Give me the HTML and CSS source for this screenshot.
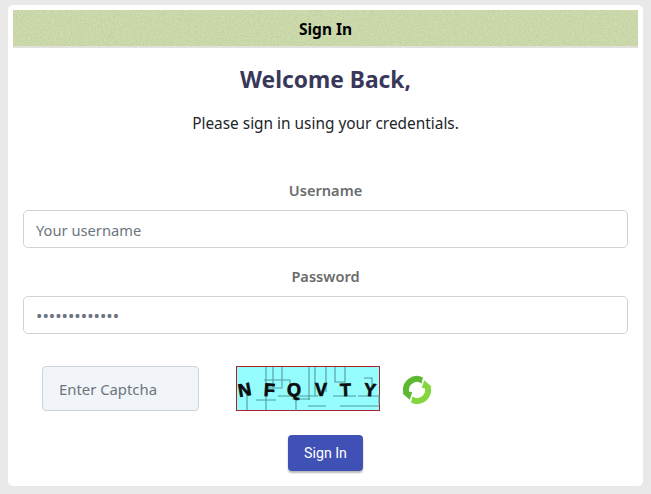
FILE: index.html
```html
<!DOCTYPE html>
<html lang="en">
<head>
<meta charset="utf-8">
<title>Sign In</title>
<link rel="stylesheet" href="styles.css">
</head>
<body>
<main class="card">
  <header class="card-header">
    <svg class="texture" aria-hidden="true" width="100%" height="100%">
      <filter id="grain-dark" x="0" y="0" width="100%" height="100%" color-interpolation-filters="sRGB">
        <feTurbulence type="fractalNoise" baseFrequency="0.6" numOctaves="2" seed="4"/>
        <feColorMatrix type="matrix" values="0 0 0 0 0.72  0 0 0 0 0.78  0 0 0 0 0.62  1.800 0 0 0 -0.850"/>
      </filter>
      <filter id="grain-light" x="0" y="0" width="100%" height="100%" color-interpolation-filters="sRGB">
        <feTurbulence type="fractalNoise" baseFrequency="0.5" numOctaves="2" seed="11"/>
        <feColorMatrix type="matrix" values="0 0 0 0 0.85  0 0 0 0 0.89  0 0 0 0 0.73  1.800 0 0 0 -0.850"/>
      </filter>
      <rect width="100%" height="100%" filter="url(#grain-light)"/>
      <rect width="100%" height="100%" filter="url(#grain-dark)"/>
    </svg>
    <span class="card-title">Sign In</span>
  </header>
  <h1 class="welcome">Welcome Back,</h1>
  <p class="lead">Please sign in using your credentials.</p>
  <form class="form">
    <div class="field">
      <label class="label" for="username">Username</label>
      <input class="input" id="username" type="text" placeholder="Your username">
    </div>
    <div class="field">
      <label class="label" for="password">Password</label>
      <input class="input input-password" id="password" type="password" value="1234567890123">
    </div>
    <div class="captcha-row">
      <input class="captcha-input" type="text" placeholder="Enter Captcha">
      <svg class="captcha" width="144" height="45" viewBox="0 0 144 45" role="img" aria-label="Captcha">
        <rect x="0.5" y="0.5" width="143" height="44" fill="#95fdfd" stroke="#a8242c"/>
        <g class="captcha-lines">
          <path d="M30 1V44M37 1V22M46 1V22H30M28 14H54V26"/>
          <path d="M42 30H82M60 27V45M79 1V30H62M73 1V34M99 1V16H109V1M90 1V26M97 30H120"/>
          <path d="M104 40H143M122 30H143V38M20 34H40M56 33H74"/>
          <path d="M11 28V44M72 40H90M128 12H136V20"/>
        </g>
        <g class="captcha-letters">
          <text x="2" y="30" transform="rotate(-10 9 24)">N</text>
          <text x="28" y="30" transform="rotate(4 33 24)">F</text>
          <text x="51" y="30">Q</text>
          <text x="79" y="30">V</text>
          <text x="104" y="30" transform="rotate(-2 110 25)">T</text>
          <text x="128" y="30" transform="rotate(5 134 24)">Y</text>
        </g>
      </svg>
      <svg class="refresh" width="30" height="30" viewBox="0 0 30 30" role="img" aria-label="Refresh">
        <path class="refresh-dark" d="M21 2.400A14 14 0 0 0 1.300 18L0.500 18.400 7.800 24.800 10.200 17 7.200 16.800A8 8 0 0 1 19.500 8.400Z"/>
        <path class="refresh-light" transform="rotate(180 15 15)" d="M21 2.400A14 14 0 0 0 1.300 18L0.500 18.400 7.800 24.800 10.200 17 7.200 16.800A8 8 0 0 1 19.500 8.400Z"/>
      </svg>
    </div>
    <div class="actions">
      <button class="submit" type="button">Sign In</button>
    </div>
  </form>
</main>
</body>
</html>
```
FILE: styles.css
```css
* {
  box-sizing: border-box;
}

html,
body {
  height: 100%;
}

body {
  margin: 0;
  padding: 5px 8px 8px;
  background: #e9e9e9;
  font-family: "Noto Sans", "Open Sans", sans-serif;
  overflow: hidden;
}

.card {
  height: 481px;
  padding: 5px 5px 0;
  background: #fff;
  border-radius: 5px;
}

.card-header {
  position: relative;
  height: 38px;
  display: flex;
  align-items: center;
  justify-content: center;
  padding-top: 2px;
  background: #cbd8aa;
  border-bottom: 2px solid #dfe1da;
  overflow: hidden;
}

.texture {
  position: absolute;
  inset: 0;
}

.card-title {
  position: relative;
  font-size: 15.5px;
  font-weight: 700;
  color: #000;
}

.welcome {
  margin: 17px 0 0;
  height: 30px;
  line-height: 30px;
  text-align: center;
  font-size: 22.8px;
  font-weight: 700;
  color: #39385a;
}

.lead {
  margin: 18px 0 0;
  height: 22px;
  line-height: 22px;
  text-align: center;
  font-size: 15.4px;
  color: #212529;
}

.form {
  margin-top: 44px;
  padding: 0 10px;
}

.field {
  display: flex;
  flex-direction: column;
  margin-bottom: 17px;
}

.label {
  height: 22px;
  line-height: 22px;
  margin-bottom: 9px;
  text-align: center;
  font-size: 14.6px;
  font-weight: 600;
  color: #6c6c6c;
}

.input {
  height: 38px;
  padding: 1px 12px 0;
  border: 1px solid #ced4da;
  border-radius: 5px;
  background: #fff;
  color: #6b7480;
  font: 14.7px "Noto Sans", "Open Sans", sans-serif;
  outline: none;
}

.input-password {
  font-size: 17px;
}

.input::placeholder,
.captcha-input::placeholder {
  color: #6c757d;
  opacity: 1;
}

.captcha-row {
  display: flex;
  align-items: center;
  margin-top: 32px;
  padding-left: 19px;
}

.captcha-input {
  width: 157px;
  height: 45px;
  padding: 0 16px;
  border: 1px solid #ced4da;
  border-radius: 4px;
  background: #f1f4f8;
  font: 14.85px "Noto Sans", "Open Sans", sans-serif;
  outline: none;
}

.captcha {
  display: block;
  margin-left: 37px;
}

.captcha-lines {
  fill: none;
  stroke: #4f9ca0;
  stroke-width: 1.1px;
}

.captcha-letters {
  font: 700 18px "Liberation Sans", sans-serif;
  fill: #0c0c0c;
  stroke: #0c0c0c;
  stroke-width: 0.7px;
}

.refresh {
  display: block;
  margin: 2px 0 0 22px;
}

.refresh-dark {
  fill: #5fb832;
}

.refresh-light {
  fill: #84d63f;
}

.actions {
  display: flex;
  justify-content: center;
  margin-top: 24px;
}

.submit {
  width: 75px;
  height: 36px;
  padding: 0;
  border: 0;
  border-radius: 4px;
  background: #3f51b5;
  color: #fff;
  font: 400 14.2px Roboto, sans-serif;
  box-shadow: 0 2px 2px rgba(0, 0, 0, 0.28);
}
```
